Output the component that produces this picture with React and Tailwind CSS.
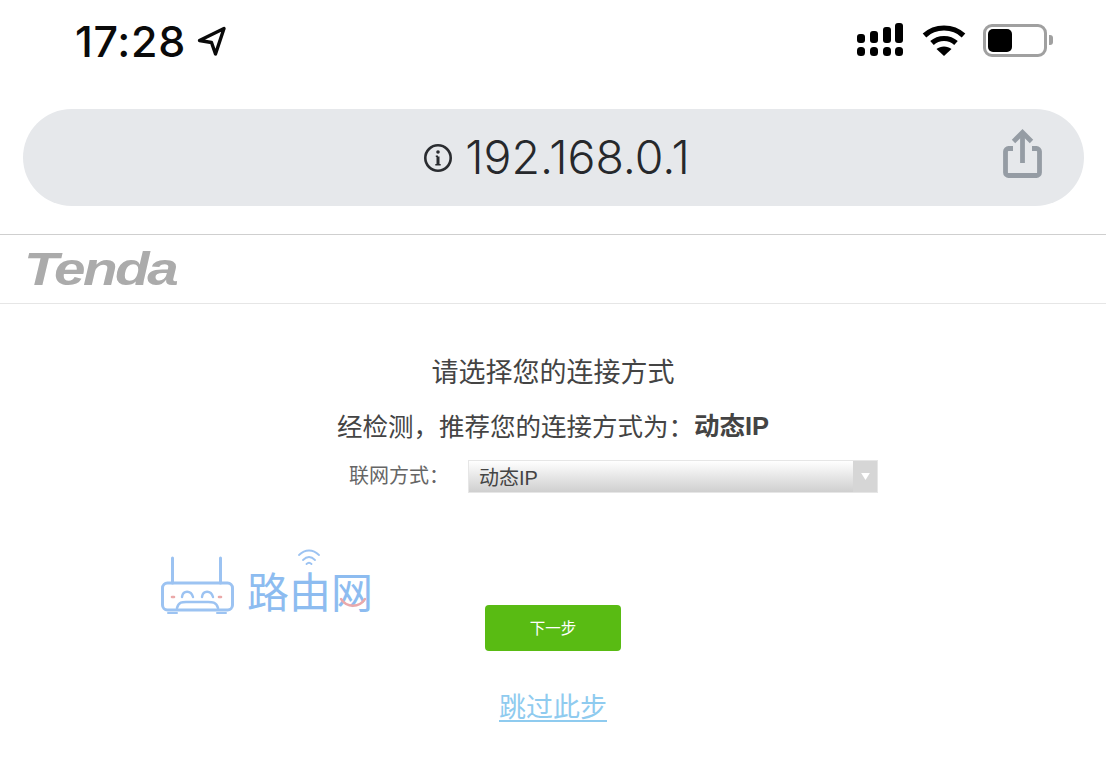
export default function App() {
  const cjk = { fontFamily: '"Noto Sans CJK SC","Liberation Sans",sans-serif' };
  const latinFirst = { fontFamily: '"Liberation Sans","Noto Sans CJK SC",sans-serif' };
  return (
    <div lang="zh-CN" className="relative w-[1106px] h-[764px] overflow-hidden bg-white text-[#333]" style={latinFirst}>
      {/* status bar */}
      <div className="h-[80px] flex items-center justify-between pl-[75px] pr-[53px]">
        <div className="flex items-center gap-[11px] mt-[2px]">
          <span className="text-[43px] leading-none font-[550] text-[#0a0a0a] tracking-[0.7px] font-['Inter']">17:28</span>
          <svg width="30" height="31" viewBox="0 0 30 31" fill="none" stroke="#0a0a0a" strokeWidth="3.4" strokeLinejoin="round" strokeLinecap="round">
            <path d="M2.5 14.5 L27 2.5 L18.5 28 L14.5 16.5 Z" />
          </svg>
        </div>
        <div className="flex items-center gap-[17px]">
          <svg className="mr-[1px]" width="47" height="34" viewBox="0 0 47 34" fill="#000">
            <rect x="0" y="11" width="8" height="9" rx="3" />
            <rect x="13" y="8" width="8" height="12" rx="3" />
            <rect x="26" y="4" width="8" height="16" rx="3" />
            <rect x="38" y="0" width="8" height="20" rx="3" />
            <rect x="0" y="24" width="8" height="9" rx="3.5" />
            <rect x="13" y="24" width="8" height="9" rx="3.5" />
            <rect x="26" y="24" width="8" height="9" rx="3.5" />
            <rect x="38" y="24" width="8" height="9" rx="3.5" />
          </svg>
          <svg width="44" height="33" viewBox="0 0 44 33" fill="none" stroke="#000" strokeWidth="5.2">
            <path d="M2.5 11.5 C13 1.5 31 1.5 41.5 11.5" />
            <path d="M10 19 C16.5 13 27.5 13 34 19" />
            <path d="M22 32 L14.5 25 C18.5 21.5 25.5 21.5 29.5 25 Z" fill="#000" stroke="none" />
          </svg>
          <div className="flex items-center gap-[2px]">
            <div className="w-[64px] h-[33px] rounded-[9px] border-[3px] border-[#a0a0a0] p-[2px]">
              <div className="w-[24px] h-full rounded-[5px] bg-black" />
            </div>
            <div className="w-[4px] h-[10px] rounded-r-[3px] bg-[#a0a0a0]" />
          </div>
        </div>
      </div>

      {/* address bar */}
      <div className="pl-[23px] pr-[22px] pt-[29px]">
        <div className="relative h-[97px] rounded-full bg-[#e6e8eb] flex items-center justify-center">
          <div className="flex items-center gap-[12px] pl-[6px]">
            <svg width="30" height="30" viewBox="0 0 30 30" fill="none" stroke="#2a2c30" strokeWidth="2.6">
              <circle cx="15" cy="15" r="12.7" />
              <path d="M15 13.5 V21.5" strokeWidth="3" />
              <path d="M12.3 21.7 H17.7 M12.8 13.2 H15" strokeWidth="1.6" />
              <circle cx="15" cy="9" r="1.8" fill="#2a2c30" stroke="none" />
            </svg>
            <span className="text-[46.5px] leading-none font-[350] text-[#26282c] font-['Inter']">192.168.0.1</span>
          </div>
          <svg className="absolute right-[42px] top-[20px]" width="39" height="50" viewBox="0 0 39 50" fill="none" stroke="#959ca4" strokeWidth="4.8">
            <path d="M10 19.5 H5.5 A3 3 0 0 0 2.5 22.5 V43.5 A3 3 0 0 0 5.5 46.5 H33.5 A3 3 0 0 0 36.5 43.5 V22.5 A3 3 0 0 0 33.5 19.5 H29" />
            <path d="M19.5 34 V5" />
            <path d="M10.5 12.5 L19.5 3.5 L28.5 12.5" />
          </svg>
        </div>
      </div>

      {/* logo strip */}
      <div className="mt-[28px] h-[70px] border-t border-b border-t-[#cfcfcf] border-b-[#e6e6e6] flex items-center pl-[24px]">
        <span className="text-[46px] leading-none font-black italic text-[#ababab] tracking-[-2px] font-['Liberation_Sans'] scale-x-[1.23] origin-left -mt-[1px]">Tenda</span>
      </div>

      {/* main */}
      <div className="flex flex-col items-center pt-[52px]">
        <h1 className="text-[27px] leading-[34px] font-normal text-[#444]">请选择您的连接方式</h1>
        <div className="mt-[19px] flex items-center text-[25.5px] leading-[34px] text-[#444]">
          <span className="-mt-[3px]" style={cjk}>{"经检测\uFF0C推荐您的连接方式为\uFF1A"}</span>
          <b className="font-bold text-[#444]">动态IP</b>
        </div>
        <div className="mt-[17px] self-start ml-[349px] flex items-start">
          <span className="w-[119px] text-[20px] text-[#666] leading-[30px]" style={cjk}>{"联网方式\uFF1A"}</span>
          <div className="w-[410px] h-[33px] border border-[#e6e6e6] bg-gradient-to-b from-white to-[#cfcfcf] flex items-stretch justify-between">
            <span className="pl-[10px] text-[20px] leading-[34px] text-[#444]">动态IP</span>
            <span className="w-[24px] bg-[#d6d6d6] flex items-center justify-center">
              <svg width="9" height="7" viewBox="0 0 10 8" fill="#fff"><path d="M0 0 H10 L5 8 Z" /></svg>
            </span>
          </div>
        </div>
        <button className="mt-[112px] w-[136px] h-[46px] pt-[2px] rounded-[4px] bg-[#59bb13] text-white text-[15.5px]">下一步</button>
        <a className="mt-[39px] text-[27px] leading-[36px] text-[#8fcbef] underline underline-offset-[3px]">跳过此步</a>
      </div>

      {/* watermark */}
      <div className="absolute left-[161px] top-[556px] flex items-end gap-[13px] text-[#8dbcf0]">
        <svg width="73" height="58" viewBox="0 0 73 58" fill="none" stroke="#9cc3f2" strokeWidth="3" strokeLinecap="round">
          <path d="M11.5 2 V27 M59.5 2 V27" />
          <rect x="1.5" y="27" width="70" height="27" rx="5" />
          <path d="M16 52 C18 45 22 46 28 46 H44 C50 46 55 45 57 52" strokeWidth="2.6" />
          <path d="M21 41 C22 34 30 34 32 41 M41 41 C42 34 50 34 52 41" strokeWidth="2.4" />
          <path d="M11 41 H13 M58 41 H60" stroke="#eba9a9" strokeWidth="2.6" />
          <path d="M7 57 H16 M56 57 H65" strokeWidth="2" />
        </svg>
        <div className="relative flex text-[42px] leading-[44px] font-normal -mb-[2px]">
          <span>路</span><span>由</span><span>网</span>
          <svg className="absolute left-[50px] -top-[24px]" width="24" height="22" viewBox="0 0 24 22" fill="none" stroke="#9cc3f2" strokeWidth="1.8" strokeLinecap="round">
            <path d="M2 7 C8 1 16 1 22 7 M6 12 C10 8 14 8 18 12 M9.5 16 C11 14.5 13 14.5 14.5 16" />
          </svg>
          <svg className="absolute left-[92px] top-[24px]" width="28" height="14" viewBox="0 0 28 14" fill="none" stroke="#eaa9ab" strokeWidth="2.4" strokeLinecap="round">
            <path d="M2 3 C8 12 20 12 26 3" />
          </svg>
        </div>
      </div>
    </div>
  );
}
